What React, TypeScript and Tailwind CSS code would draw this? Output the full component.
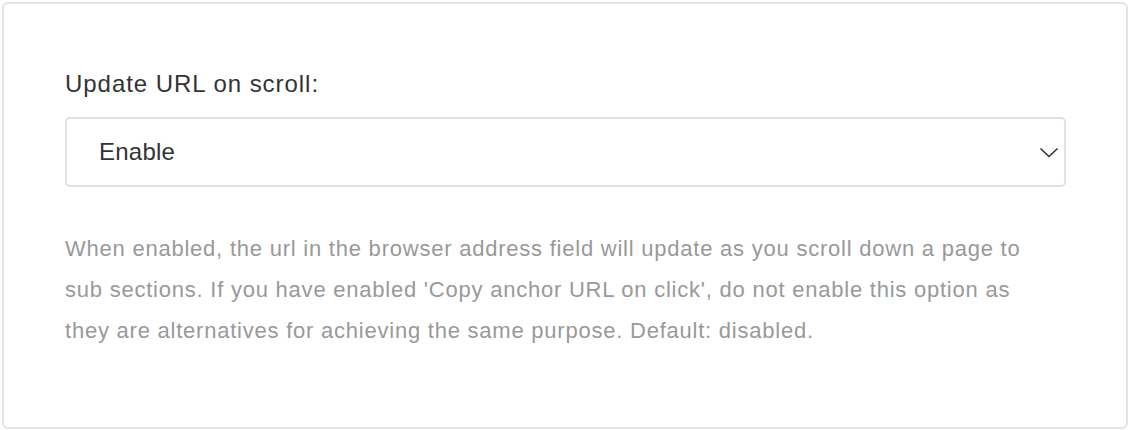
import { useState } from 'react';

const App = () => {
  const [value, setValue] = useState('enable');

  return (
    <div className="p-[2px] bg-white" style={{ fontFamily: '"Liberation Sans", Arial, sans-serif' }}>
      <div className="h-[427px] rounded-md border-2 border-[#e4e4e4] bg-white pl-[61px] pr-[60px] pt-[64px]">
        <label htmlFor="update-url" className="block text-[24px] leading-[32px] tracking-[0.04em] text-[#333]">
          Update URL on scroll:
        </label>
        <div className="relative mt-[17px]">
          <select
            id="update-url"
            value={value}
            onChange={(e) => setValue(e.target.value)}
            className="block h-[70px] w-full appearance-none rounded-[5px] border-2 border-[#e1e1e1] bg-white pl-[32px] pr-12 text-[24px] tracking-[0.01em] text-[#333] outline-none"
          >
            <option value="enable">Enable</option>
            <option value="disable">Disable</option>
          </select>
          <svg
            className="pointer-events-none absolute right-[7px] top-[30px]"
            width="20"
            height="11"
            viewBox="0 0 20 11"
            fill="none"
          >
            <path d="M1.5 1.5 L10 9.5 L18.5 1.5" stroke="#333" strokeWidth="1.6" />
          </svg>
        </div>
        <p className="mt-[41px] max-w-[965px] text-[22px] leading-[41px] tracking-[0.035em] text-[#999]">
          When enabled, the url in the browser address field will update as you scroll down a page to sub sections. If
          you have enabled 'Copy anchor URL on click', do not enable this option as they are alternatives for achieving
          the same purpose. Default: disabled.
        </p>
      </div>
    </div>
  );
};

export default App;
